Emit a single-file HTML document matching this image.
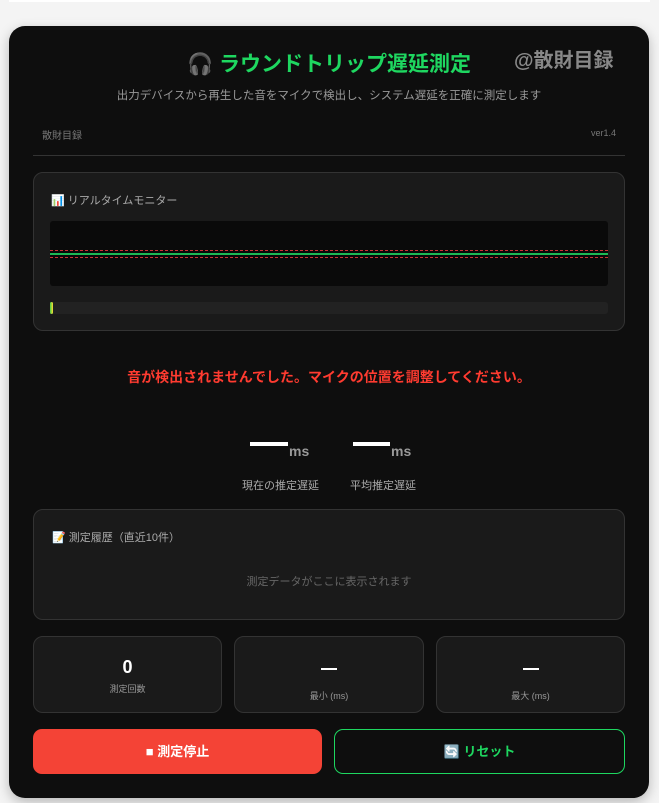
<!DOCTYPE html>
<html><head><meta charset="utf-8"><style>
*{margin:0;padding:0;box-sizing:border-box}
body{width:659px;height:803px;background:#f4f4f4;font-family:"Liberation Sans","Noto Sans CJK JP",sans-serif;position:relative;overflow:hidden}
.top{position:absolute;left:9px;top:0;width:641px;height:2px;background:#fff}
.card{position:absolute;left:9px;top:26px;width:640px;height:772px;background:#0e0e0e;border-radius:16px;box-shadow:0 4px 12px rgba(0,0,0,.25)}
.abs{position:absolute}
.box{position:absolute;background:#1a1a1a;border:1px solid #333;border-radius:10px}
.lab{font-size:11px;color:#aaa}
</style></head><body>
<div class="top"></div>
<div class="card">
<div class="abs" style="left:0;width:640px;top:22px;text-align:center;font-size:21px;font-weight:bold;color:#1ed760">🎧 ラウンドトリップ遅延測定</div>
<div class="abs" style="left:505px;top:18px;font-size:20px;font-weight:bold;color:#888">@散財目録</div>
<div class="abs" style="left:0;width:640px;top:61px;text-align:center;font-size:11.5px;color:#999">出力デバイスから再生した音をマイクで検出し、システム遅延を正確に測定します</div>
<div class="abs" style="left:33px;top:101px;font-size:10px;color:#777">散財目録</div>
<div class="abs" style="right:33px;top:102px;font-size:9px;color:#777">ver1.4</div>
<div class="abs" style="left:24px;top:129px;width:592px;height:1px;background:#333"></div>
<div class="box" style="left:24px;top:146px;width:592px;height:159px">
 <div class="abs lab" style="left:17px;top:19px">📊 リアルタイムモニター</div>
 <div class="abs" style="left:16px;top:48px;width:558px;height:65px;background:#0a0a0a;border-radius:3px">
  <div class="abs" style="left:0;top:29px;width:100%;border-top:1px dashed #c33"></div>
  <div class="abs" style="left:0;top:36px;width:100%;border-top:1px dashed #c33"></div>
  <div class="abs" style="left:0;top:32px;width:100%;height:2px;background:#1db954"></div>
 </div>
 <div class="abs" style="left:16px;top:129px;width:558px;height:12px;background:#222;border-radius:3px"><div style="width:3px;height:12px;background:linear-gradient(90deg,#4c4,#fd3);border-radius:2px"></div></div>
</div>
<div class="abs" style="left:0;width:640px;top:341px;text-align:center;font-size:14px;font-weight:bold;color:#ff3b30">音が検出されませんでした。マイクの位置を調整してください。</div>
<div class="abs" style="left:241px;top:416px;width:38px;height:4px;background:#fff"></div>
<div class="abs" style="left:280px;top:417px;font-size:14px;font-weight:bold;color:#999">ms</div>
<div class="abs" style="left:344px;top:416px;width:37px;height:4px;background:#fff"></div>
<div class="abs" style="left:382px;top:417px;font-size:14px;font-weight:bold;color:#999">ms</div>
<div class="abs lab" style="left:233px;top:451px">現在の推定遅延</div>
<div class="abs lab" style="left:341px;top:451px">平均推定遅延</div>
<div class="box" style="left:24px;top:483px;width:592px;height:111px">
 <div class="abs lab" style="left:18px;top:19px">📝 測定履歴（直近10件）</div>
 <div class="abs" style="left:0;width:100%;top:63px;text-align:center;font-size:11px;color:#666">測定データがここに表示されます</div>
</div>
<div class="box" style="left:24px;top:610px;width:189px;height:77px;text-align:center"><div style="margin-top:20px;font-size:18px;font-weight:bold;color:#fff">0</div><div style="font-size:9px;color:#999;margin-top:4px">測定回数</div></div>
<div class="box" style="left:225px;top:610px;width:190px;height:77px;text-align:center"><div style="margin:31px auto 0;width:16px;height:2px;background:#fff"></div><div style="font-size:9px;color:#999;margin-top:19px">最小 (ms)</div></div>
<div class="box" style="left:427px;top:610px;width:189px;height:77px;text-align:center"><div style="margin:31px auto 0;width:16px;height:2px;background:#fff"></div><div style="font-size:9px;color:#999;margin-top:19px">最大 (ms)</div></div>
<div class="abs" style="left:24px;top:703px;width:289px;height:45px;background:#f44336;border-radius:9px;text-align:center;line-height:45px;font-size:13px;font-weight:bold;color:#fff">■ 測定停止</div>
<div class="abs" style="left:325px;top:703px;width:291px;height:45px;border:1px solid #1ed760;border-radius:9px;text-align:center;line-height:43px;font-size:13px;font-weight:bold;color:#1ed760">🔄 リセット</div>
</div>
</body></html>
